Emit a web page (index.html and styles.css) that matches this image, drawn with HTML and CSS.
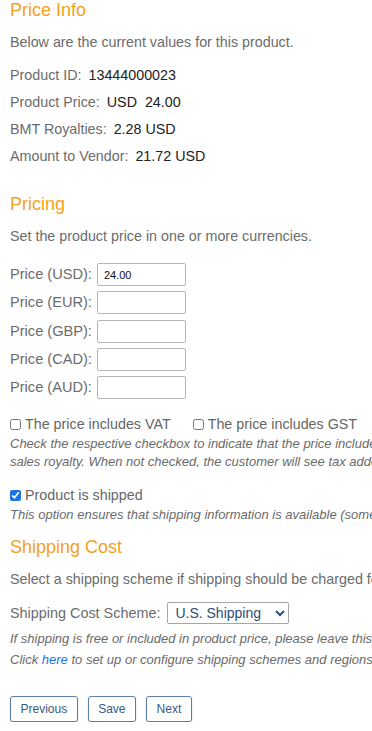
FILE: index.html
```html
<!DOCTYPE html>
<html lang="en">
<head>
  <meta charset="UTF-8">
  <title>Price Info</title>
  <meta name="viewport" content="width=device-width, initial-scale=1.0">
  <link rel="stylesheet" href="styles.css">
</head>
<body>
  <div class="page">
    <h2 class="section-title first">Price Info</h2>
    <p class="intro">Below are the current values for this product.</p>

    <div class="info-list">
      <div class="info-row"><span class="label">Product ID:</span> <span class="value">13444000023</span></div>
      <div class="info-row"><span class="label">Product Price:</span> <span class="value">USD&nbsp; 24.00</span></div>
      <div class="info-row"><span class="label">BMT Royalties:</span> <span class="value">2.28 USD</span></div>
      <div class="info-row"><span class="label">Amount to Vendor:</span> <span class="value">21.72 USD</span></div>
    </div>

    <h2 class="section-title">Pricing</h2>
    <p class="intro">Set the product price in one or more currencies.</p>

    <div class="price-grid">
      <label for="p-usd">Price (USD):</label>
      <input type="text" id="p-usd" value="24.00">
      <label for="p-eur">Price (EUR):</label>
      <input type="text" id="p-eur">
      <label for="p-gbp">Price (GBP):</label>
      <input type="text" id="p-gbp">
      <label for="p-cad">Price (CAD):</label>
      <input type="text" id="p-cad">
      <label for="p-aud">Price (AUD):</label>
      <input type="text" id="p-aud">
    </div>

    <div class="check-row">
      <label class="check"><input type="checkbox"> The price includes VAT</label>
      <label class="check"><input type="checkbox"> The price includes GST</label>
    </div>
    <p class="note">Check the respective checkbox to indicate that the price includes tax, so the tax is deducted before the<br>sales royalty. When not checked, the customer will see tax added on top of the price.</p>

    <div class="check-row shipped">
      <label class="check"><input type="checkbox" checked> Product is shipped</label>
    </div>
    <p class="note">This option ensures that shipping information is available (some products are not shipped).</p>

    <h2 class="section-title shipping">Shipping Cost</h2>
    <p class="intro">Select a shipping scheme if shipping should be charged for this product.</p>

    <div class="scheme-row">
      <label for="scheme">Shipping Cost Scheme:</label>
      <select id="scheme">
        <option>U.S. Shipping</option>
        <option>International</option>
        <option>None</option>
      </select>
    </div>
    <p class="note tall">If shipping is free or included in product price, please leave this blank.<br>Click <a href="#">here</a> to set up or configure shipping schemes and regions.</p>

    <div class="buttons">
      <button>Previous</button>
      <button>Save</button>
      <button>Next</button>
    </div>
  </div>
</body>
</html>
```

FILE: styles.css
```css
* {
  box-sizing: border-box;
}

html, body {
  overflow: hidden;
}

body {
  margin: 0;
  padding: 0;
  background: #fff;
  font-family: 'Liberation Sans', Arial, sans-serif;
  font-size: 14px;
  color: #6b6b6b;
}

.page {
  padding: 0 10px;
  width: 760px;
}

.section-title {
  margin: 24px 0 0;
  font-size: 18px;
  line-height: 20px;
  font-weight: normal;
  color: #f5a11c;
}

.section-title.first {
  margin-top: 0;
}

.section-title.shipping {
  margin-top: 13px;
}

.intro {
  margin: 12px 0 0;
  line-height: 20px;
  font-size: 14.3px;
  white-space: nowrap;
}

.info-list {
  margin-top: 10px;
}

.info-row {
  line-height: 27px;
  font-size: 14.3px;
  white-space: nowrap;
}

.info-row .value {
  color: #222;
  margin-left: 3px;
}

.price-grid {
  display: grid;
  grid-template-columns: auto 89px;
  justify-content: start;
  column-gap: 5px;
  row-gap: 5.3px;
  margin-top: 17px;
  align-items: center;
}

.price-grid label {
  font-size: 14.6px;
  line-height: 23px;
  white-space: nowrap;
}

.price-grid input {
  height: 23px;
  width: 89px;
  padding: 1px 6px 0;
  border: 1px solid #b5b5b5;
  border-radius: 2px;
  font-family: 'Liberation Sans', Arial, sans-serif;
  font-size: 11px;
  color: #111;
}

.check-row {
  display: flex;
  gap: 22px;
  margin-top: 15px;
  line-height: 20px;
  white-space: nowrap;
}

.check {
  display: flex;
  align-items: center;
  font-size: 14.3px;
  color: #666;
}

.check input {
  margin: 0 4px 0 0;
  width: 11px;
  height: 11px;
}

.check input:checked {
  accent-color: #1a73e8;
}

.check-row.shipped {
  margin-top: 14px;
}

.note {
  margin: 1px 0 0;
  font-size: 13px;
  font-style: italic;
  line-height: 18px;
  white-space: nowrap;
  color: #6a6a6a;
}

.note.tall {
  margin-top: 4px;
  line-height: 21px;
}

.note a {
  color: #1a73e8;
  text-decoration: none;
}

.scheme-row {
  display: flex;
  align-items: center;
  gap: 7px;
  margin-top: 13px;
  font-size: 14.4px;
  white-space: nowrap;
}

.scheme-row select {
  width: 122px;
  height: 22px;
  border: 1px solid #a5a5a5;
  border-radius: 2px;
  background: #fff;
  font-family: 'Liberation Sans', Arial, sans-serif;
  font-size: 14px;
  color: #2d4d74;
  padding: 0 3px;
}

.buttons {
  display: flex;
  gap: 10px;
  margin-top: 26px;
}

.buttons button {
  height: 26px;
  padding: 0 9.5px;
  background: #fff;
  border: 1.5px solid #5b7ea4;
  border-radius: 3px;
  font-family: 'Liberation Sans', Arial, sans-serif;
  font-size: 12px;
  color: #3a5a80;
  box-shadow: 0 1px 2px rgba(0, 0, 0, 0.15);
  cursor: pointer;
}
```
